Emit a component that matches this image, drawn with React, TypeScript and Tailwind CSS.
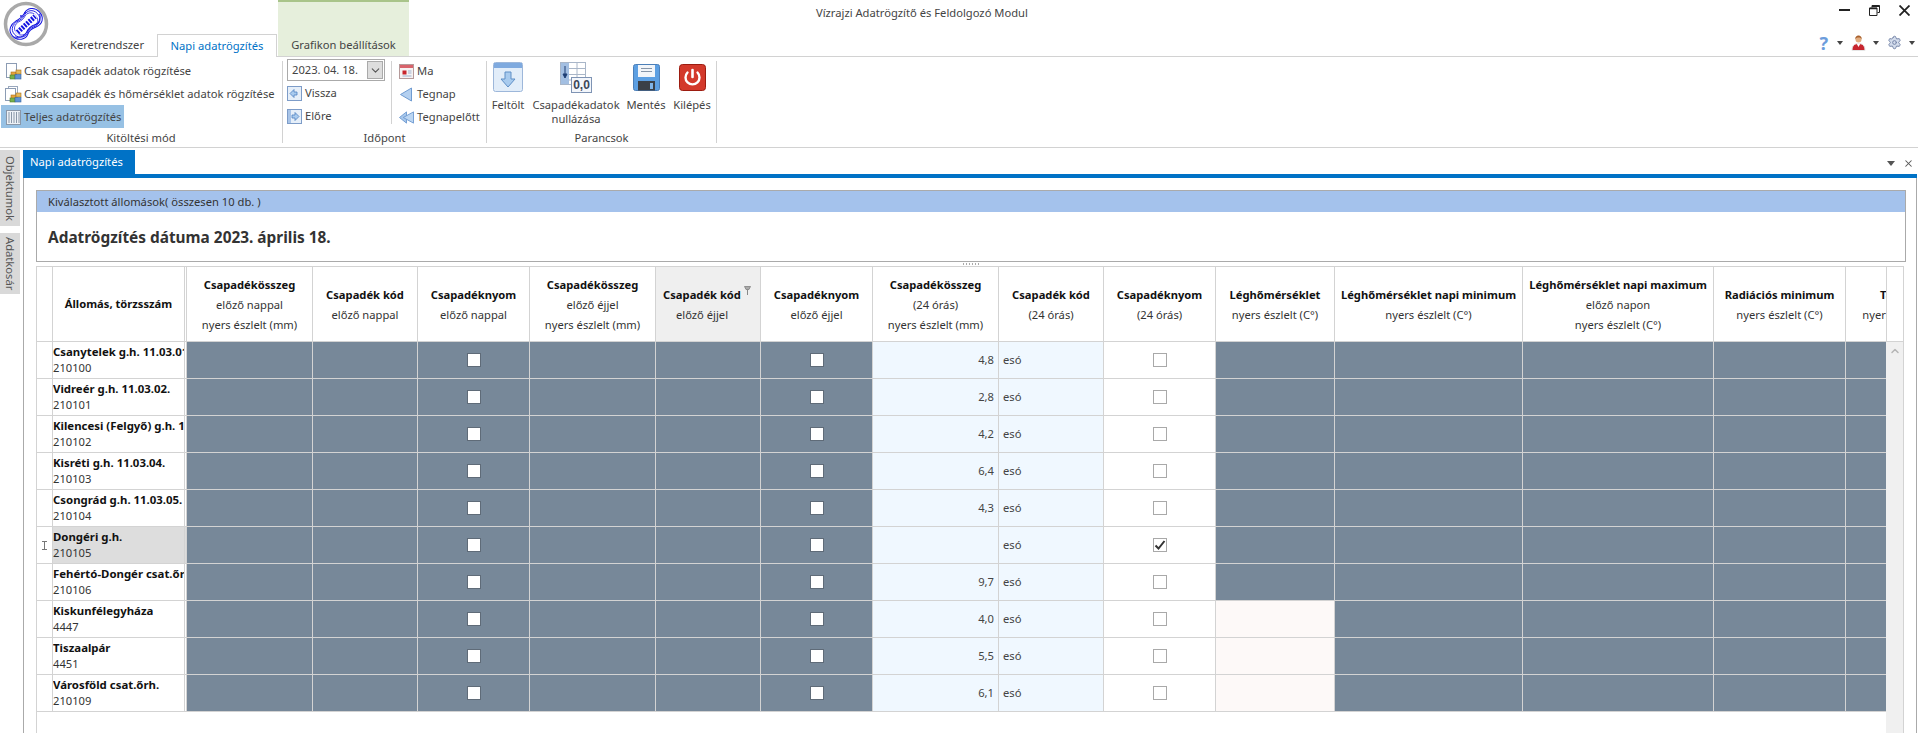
import { ChevronDown, ChevronUp, Settings, X } from "lucide-react";

const COLS = "grid grid-cols-[16px_134px_126px_105px_112px_126px_105px_112px_126px_105px_112px_119px_188px_191px_132px_120px] w-[1929px]";

const HEADERS = [
  { t: "Csapadékösszeg", s: ["előző nappal", "nyers észlelt (mm)"] },
  { t: "Csapadék kód", s: ["előző nappal"] },
  { t: "Csapadéknyom", s: ["előző nappal"] },
  { t: "Csapadékösszeg", s: ["előző éjjel", "nyers észlelt (mm)"] },
  { t: "Csapadék kód", s: ["előző éjjel"], filtered: true },
  { t: "Csapadéknyom", s: ["előző éjjel"] },
  { t: "Csapadékösszeg", s: ["(24 órás)", "nyers észlelt (mm)"] },
  { t: "Csapadék kód", s: ["(24 órás)"] },
  { t: "Csapadéknyom", s: ["(24 órás)"] },
  { t: "Léghőmérséklet", s: ["nyers észlelt (C°)"] },
  { t: "Léghőmérséklet napi minimum", s: ["nyers észlelt (C°)"] },
  { t: "Léghőmérséklet napi maximum", s: ["előző napon", "nyers észlelt (C°)"] },
  { t: "Radiációs minimum", s: ["nyers észlelt (C°)"] },
  { t: "Talajhőm", s: ["nyers észlelt (C°)"] },
];

const ROWS = [
  { name: "Csanytelek g.h. 11.03.01.", id: "210100", v: "4,8" },
  { name: "Vidreér g.h. 11.03.02.", id: "210101", v: "2,8" },
  { name: "Kilencesi (Felgyő) g.h. 11.03.03.", id: "210102", v: "4,2" },
  { name: "Kisréti g.h. 11.03.04.", id: "210103", v: "6,4" },
  { name: "Csongrád g.h. 11.03.05.", id: "210104", v: "4,3" },
  { name: "Dongéri g.h.", id: "210105", v: "", selected: true, checked: true },
  { name: "Fehértó-Dongér csat.őrh.", id: "210106", v: "9,7" },
  { name: "Kiskunfélegyháza", id: "4447", v: "4,0", temp: true },
  { name: "Tiszaalpár", id: "4451", v: "5,5", temp: true },
  { name: "Városföld csat.őrh.", id: "210109", v: "6,1", temp: true },
];

const PEANUT = "M5 23c0-8 7-10 12-9s7 2 12 0 12 1 12 9-6 11-12 9-8-2-12 0-12-1-12-9z";

function Logo() {
  return (
    <svg width="46" height="46" viewBox="0 0 46 46">
      <circle cx="23" cy="23" r="20.500" fill="#fff" stroke="#a9a9a9" strokeWidth="3.500" />
      <g fill="none" stroke="#1414e0" transform="rotate(-42 23 23)">
        {[1, 0.86, 0.72].map((k) => (
          <path key={k} d={PEANUT} strokeWidth="1" transform={`translate(23 23) scale(${k}) translate(-23 -23)`} />
        ))}
        <path d="M10 23.500h26" strokeWidth="5" stroke="#fff" />
        <path d="M11 23.500h24" strokeWidth="5" strokeDasharray="2 1.200" />
        <path d="M6 25c3 5 9 6 12 4.500s8-2 11 0 9 0 11-5" strokeWidth="1" />
      </g>
      <circle cx="22" cy="12" r="0.900" fill="#1414e0" />
      <circle cx="18" cy="15" r="0.900" fill="#1414e0" />
    </svg>
  );
}

function PageChart({ double }: { double?: boolean }) {
  return (
    <svg width="17" height="17" viewBox="0 0 17 17" className="-mr-px shrink-0">
      {double && <rect x="3.500" y="0.500" width="9" height="11" fill="#fff" stroke="#9aa8bd" />}
      <rect x={double ? 0.5 : 1.5} y={double ? 2.5 : 0.5} width="10" height={double ? 12 : 14} fill="#fff" stroke="#8c9cb4" />
      <rect x="6" y="9" width="5" height="3.500" fill="#e8a33c" stroke="#a8701c" strokeWidth="0.600" />
      <rect x="11" y="7" width="5" height="4" fill="#e4b95a" stroke="#a8701c" strokeWidth="0.600" />
      <rect x="5" y="12" width="5" height="4" fill="#76b04a" stroke="#4d7f2a" strokeWidth="0.600" />
      <rect x="10" y="11.500" width="6" height="4.500" fill="#5f93d3" stroke="#3a659e" strokeWidth="0.600" />
    </svg>
  );
}

function Bars() {
  return (
    <svg width="17" height="17" viewBox="0 0 17 17" className="-mr-px shrink-0">
      <rect x="1.500" y="1.500" width="14" height="14" fill="#eef2f7" stroke="#8a97a8" />
      <path d="M4 3v11M6.500 3v11M9 3v11M11.500 3v11M14 3v11" stroke="#8a97a8" />
    </svg>
  );
}

function NavBox({ right }: { right?: boolean }) {
  return (
    <svg width="15" height="15" viewBox="0 0 15 15" className="shrink-0">
      <rect x="0.500" y="0.500" width="14" height="14" fill="#e6eff9" stroke="#7d9cc8" />
      {right ? <rect x="1" y="1" width="3" height="13" fill="#a8c4e8" /> : null}
      <path
        d={right ? "M5 6h3V3.500L12 7.500 8 11.500V9H5z" : "M10 6H7V3.500L3 7.500l4 4V9h3z"}
        fill="#a9cbee"
        stroke="#4f80c0"
        strokeWidth="0.800"
      />
    </svg>
  );
}

function CalendarIcon() {
  return (
    <svg width="15" height="15" viewBox="0 0 15 15" className="shrink-0">
      <rect x="0.500" y="0.500" width="14" height="14" fill="#f6f2f2" stroke="#b59a9a" />
      <rect x="1" y="1" width="13" height="3" fill="#d8636b" />
      <rect x="3.500" y="6.500" width="4" height="4" fill="#c8242c" />
      <path d="M9 7h3.500M9 9h3.500M3.500 12h9" stroke="#9db2cf" />
    </svg>
  );
}

function Triangle({ double }: { double?: boolean }) {
  if (double) {
    return (
      <svg width="15" height="15" viewBox="0 0 16 15" className="shrink-0">
        <path d="M8 1.500v12L0.500 7.500z" fill="#a8c8ec" stroke="#6f9bd1" />
        <path d="M15.500 1.500v12L4.500 7.500z" fill="#bcd6f2" stroke="#6f9bd1" />
      </svg>
    );
  }
  return (
    <svg width="15" height="15" viewBox="0 0 15 15" className="shrink-0">
      <path d="M12.500 1v13L1.500 7.500z" fill="#b4d0f0" stroke="#6f9bd1" />
    </svg>
  );
}

function UploadIcon() {
  return (
    <svg width="30" height="30" viewBox="0 0 30 30">
      <rect x="0.500" y="0.500" width="29" height="29" rx="2" fill="#e2edf9" stroke="#9db7da" />
      <rect x="1" y="1" width="28" height="5" fill="#7faadf" />
      <path d="M12 10h6v7h4l-7 8-7-8h4z" fill="#a9cbee" stroke="#5f8fc6" />
    </svg>
  );
}

function ZeroIcon() {
  return (
    <svg width="32" height="31" viewBox="0 0 32 31">
      <rect x="0.500" y="0.500" width="25" height="22" fill="#fff" stroke="#a9b6c8" />
      <rect x="1" y="1" width="8" height="21" fill="#a3bfe2" />
      <path d="M9 6.500h16M9 12.500h16M9 18h16M17 1v21" stroke="#a9b6c8" />
      <path d="M5 4v11M3 12L5 16l2-4z" stroke="#1f3f74" fill="#1f3f74" />
      <rect x="11.500" y="15.500" width="20" height="15" fill="#f3f6fb" stroke="#7f94b4" />
      <text x="21.500" y="27" textAnchor="middle" fontSize="12" fontWeight="700" fill="#3b4658" fontFamily="'Liberation Sans', sans-serif">
        0,0
      </text>
    </svg>
  );
}

function SaveIcon() {
  return (
    <svg width="27" height="30" viewBox="0 0 27 30">
      <rect x="0.500" y="2.500" width="26" height="26" rx="2" fill="#5c9fe2" stroke="#4c7fb8" />
      <rect x="5" y="3" width="17" height="12" fill="#f2f5f9" />
      <path d="M8 6.500h11M8 9.500h11" stroke="#8695a8" />
      <rect x="5" y="19" width="17" height="9.500" fill="#3a4048" />
      <rect x="17" y="21" width="3" height="6" fill="#7fb4e8" />
    </svg>
  );
}

function PowerIcon() {
  return (
    <svg width="27" height="30" viewBox="0 0 27 30">
      <rect x="0.500" y="2.500" width="26" height="26" rx="3" fill="#d3392b" stroke="#9c1c10" />
      <path d="M8.500 10.500a7 7 0 1 0 10 0" fill="none" stroke="#fff" strokeWidth="2.400" strokeLinecap="round" />
      <path d="M13.500 8v7" stroke="#fff" strokeWidth="2.600" strokeLinecap="round" />
    </svg>
  );
}

function Caret() {
  return <span className="block h-0 w-0 border-x-[3.500px] border-t-[4px] border-x-transparent border-t-[#444]" />;
}

function Check({ dark, checked }: { dark?: boolean; checked?: boolean }) {
  return (
    <span
      className={
        dark
          ? "flex h-[14px] w-[14px] items-center justify-center border border-[#5f6b78] bg-white"
          : "flex h-[14px] w-[14px] items-center justify-center border border-[#a9a9a9] bg-white"
      }
    >
      {checked && (
        <svg width="12" height="12" viewBox="0 0 12 12">
          <path d="M1.500 6.500l3 3L10.500 2" fill="none" stroke="#333" strokeWidth="2" />
        </svg>
      )}
    </span>
  );
}

function RibbonRow({ children }: { children: React.ReactNode }) {
  return <div className="flex h-[23px] items-center gap-[3px] whitespace-nowrap">{children}</div>;
}

function CommandButton({ icon, label, width }: { icon: React.ReactNode; label: React.ReactNode; width: string }) {
  return (
    <div className={`flex flex-col items-center ${width}`}>
      <div className="flex h-[39px] items-start pt-[3px]">{icon}</div>
      <div className="text-center leading-[14px]">{label}</div>
    </div>
  );
}

const cell = "border-r border-b border-[#d3d3d3]";

function DataRow({ row }: { row: (typeof ROWS)[number] }) {
  const dark = `${cell} bg-[#778899]`;
  const darkCheck = `${dark} flex items-center justify-center`;
  return (
    <div className={`${COLS} h-[37px]`}>
      <div className={`${cell} flex items-center justify-center`}>
        {row.selected && (
          <svg width="5" height="9" viewBox="0 0 5 9">
            <path d="M0 .5h5M0 8.500h5M2.500 1v7" stroke="#777" fill="none" />
          </svg>
        )}
      </div>
      <div
        className={`border-r-[3px] border-b border-double border-r-[#d3d3d3] border-b-[#d3d3d3] overflow-hidden whitespace-nowrap pt-[1.500px] leading-[16px] ${row.selected ? "bg-[#dddddd]" : "bg-white"}`}
      >
        <div className="text-[11.400px] font-bold text-[#111]">{row.name}</div>
        <div className="text-[#333]">{row.id}</div>
      </div>
      <div className={dark} />
      <div className={dark} />
      <div className={darkCheck}>
        <Check dark />
      </div>
      <div className={dark} />
      <div className={dark} />
      <div className={darkCheck}>
        <Check dark />
      </div>
      <div className={`${cell} bg-[#f0f8ff] flex items-center justify-end pr-[4px] text-[#444]`}>{row.v}</div>
      <div className={`${cell} bg-[#f0f8ff] flex items-center pl-[4px] text-[#444]`}>esó</div>
      <div className={`${cell} flex items-center justify-center bg-white`}>
        <Check checked={row.checked} />
      </div>
      <div className={row.temp ? `${cell} bg-[#fdf9f8]` : dark} />
      <div className={dark} />
      <div className={dark} />
      <div className={dark} />
      <div className={dark} />
    </div>
  );
}

export default function App() {
  return (
    <div className="flex h-[733px] w-[1918px] flex-col overflow-hidden bg-white font-['Noto_Sans','Open_Sans',sans-serif] text-[11.200px] text-[#444]">
      {/* title bar + ribbon tabs */}
      <div className="flex h-[57px] shrink-0 border-b border-[#d2d2d2]">
        <div className="w-[57px] pl-[3px] pt-[1px]">
          <Logo />
        </div>
        <div className="flex h-[22px] w-[100px] items-center justify-center self-end">Keretrendszer</div>
        <div className="z-10 -mb-px flex h-[23px] w-[120px] items-center justify-center self-end border border-b-0 border-[#d2d2d2] bg-white text-[#0072c6]">
          Napi adatrögzítés
        </div>
        <div className="ml-px flex w-[131px] flex-col justify-end border-t-2 border-[#a9c48a] bg-[#e6efdc]">
          <div className="flex h-[22px] items-center justify-center">Grafikon beállítások</div>
        </div>
        <div className="flex flex-1 flex-col">
          <div className="flex h-[26px] items-center">
            <span className="ml-[407px]">Vízrajzi Adatrögzítő és Feldolgozó Modul</span>
            <div className="ml-auto flex items-center gap-[19px] pr-[8px]">
              <span className="mt-[-6px] h-[2px] w-[11px] bg-[#222]" />
              <svg width="11" height="11" viewBox="0 0 11 11" className="mt-[-6px]">
                <path d="M3 2.500V.5h7.500v7H8.500M.5 3h7.500v7.500H.5z" fill="none" stroke="#222" />
                <path d="M.5 3.500H8M3 1.200h7.500" stroke="#222" strokeWidth="1.500" />
              </svg>
              <svg width="11" height="11" viewBox="0 0 11 11" className="mt-[-6px]">
                <path d="M.5.5l10 10M10.500.5l-10 10" stroke="#222" strokeWidth="1.800" />
              </svg>
            </div>
          </div>
          <div className="flex h-[30px] items-center justify-end pr-[3px] pt-[3px]">
            <span className="text-[18px] font-bold leading-none text-[#6d9ddc]">?</span>
            <span className="ml-[9px] mr-[8px]">
              <Caret />
            </span>
            <svg width="15" height="16" viewBox="0 0 15 16">
              <path d="M1 15.500c0-5 2.500-7 6.500-7s6.500 2 6.500 7z" fill="#c8252e" stroke="#e6e6e6" />
              <path d="M5.500 8.500l2 3.500 2-3.500z" fill="#fff" />
              <circle cx="7.500" cy="4.500" r="3" fill="#e2ad80" />
              <path d="M4.300 4.500C4 1.500 6 .5 7.500.5s3.500 1 3.200 4c-.5-1.500-1.500-2-3.200-2s-2.700.5-3.200 2z" fill="#a8602c" />
            </svg>
            <span className="ml-[7px] mr-[8px]">
              <Caret />
            </span>
            <Settings size={15} fill="#d3dcec" stroke="#7585a8" strokeWidth={1.600} />
            <span className="ml-[7px]">
              <Caret />
            </span>
          </div>
        </div>
      </div>

      {/* ribbon */}
      <div className="flex h-[91px] shrink-0 border-b border-[#d2d2d2]">
        <div className="flex w-[282px] flex-col pt-[3px]">
          <div className="pl-[5px]">
            <RibbonRow>
              <PageChart />
              Csak csapadék adatok rögzítése
            </RibbonRow>
            <RibbonRow>
              <PageChart double />
              Csak csapadék és hőmérséklet adatok rögzítése
            </RibbonRow>
          </div>
          <div className="ml-px -mt-px flex h-[23px] w-[123px] items-center gap-[3px] whitespace-nowrap bg-[#97c1e4] pl-[4px] pt-px">
            <Bars />
            Teljes adatrögzítés
          </div>
          <div className="mt-auto flex h-[18px] items-center justify-center">Kitöltési mód</div>
        </div>
        <div className="my-[4px] w-px bg-[#d2d2d2]" />

        <div className="flex w-[203px] flex-col pt-[2px]">
          <div className="flex pl-[4px]">
            <div className="w-[104px]">
              <div className="mb-px flex h-[22px] w-[98px] items-center border border-[#aaa] pl-[4px]">
                <span className="flex-1">2023. 04. 18.</span>
                <span className="mr-px flex h-[18px] w-[16px] items-center justify-center border border-[#aaa] bg-[#ddd]">
                  <ChevronDown size={13} color="#555" />
                </span>
              </div>
              <RibbonRow>
                <NavBox />
                Vissza
              </RibbonRow>
              <RibbonRow>
                <NavBox right />
                Előre
              </RibbonRow>
            </div>
            <div className="mt-[2px] mb-[5px] w-px bg-[#d2d2d2]" />
            <div className="pl-[7px] pt-px">
              <RibbonRow>
                <CalendarIcon />
                Ma
              </RibbonRow>
              <RibbonRow>
                <Triangle />
                Tegnap
              </RibbonRow>
              <RibbonRow>
                <Triangle double />
                Tegnapelőtt
              </RibbonRow>
            </div>
          </div>
          <div className="mt-auto flex h-[18px] items-center justify-center">Időpont</div>
        </div>
        <div className="my-[4px] w-px bg-[#d2d2d2]" />

        <div className="flex w-[229px] flex-col pt-[2px]">
          <div className="flex pl-[1px]">
            <CommandButton width="w-[40px]" icon={<UploadIcon />} label="Feltölt" />
            <CommandButton
              width="w-[96px]"
              icon={<ZeroIcon />}
              label={
                <>
                  Csapadékadatok
                  <br />
                  nullázása
                </>
              }
            />
            <CommandButton width="w-[44px]" icon={<SaveIcon />} label="Mentés" />
            <CommandButton width="w-[48px]" icon={<PowerIcon />} label="Kilépés" />
          </div>
          <div className="mt-auto flex h-[18px] items-center justify-center">Parancsok</div>
        </div>
        <div className="my-[4px] w-px bg-[#d2d2d2]" />
      </div>

      {/* document area */}
      <div className="flex min-h-0 flex-1">
        <div className="flex w-[23px] shrink-0 flex-col gap-[7px] pt-[2px] text-[#555]">
          <div className="flex h-[76px] w-[20px] items-center justify-center bg-[#d9d9d9] [writing-mode:vertical-rl]">
            Objektumok
          </div>
          <div className="flex h-[61px] w-[20px] items-center justify-center bg-[#d9d9d9] [writing-mode:vertical-rl]">
            Adatkosár
          </div>
        </div>

        <div className="flex w-[1894px] flex-col">
          <div className="flex h-[26px] shrink-0 items-end">
            <div className="flex h-[24px] w-[112px] items-center bg-[#0072c6] pl-[7px] text-white">Napi adatrögzítés</div>
            <div className="ml-auto flex items-center gap-[8px] self-center pr-[3px] pt-[4px]">
              <span className="h-0 w-0 border-x-[4.500px] border-t-[5px] border-x-transparent border-t-[#555]" />
              <X size={11} color="#555" strokeWidth={2.200} />
            </div>
          </div>
          <div className="h-[4px] shrink-0 bg-[#0072c6]" />

          <div className="flex min-h-0 flex-1 flex-col border-x border-[#aaa] pl-[12px] pr-[10px] pt-[12px]">
            <div className="flex h-[72px] shrink-0 flex-col border border-[#aaa]">
              <div className="flex h-[21px] items-center bg-[#a4c2ec] pl-[11px] pt-px text-[#333]">
                Kiválasztott állomások( összesen 10 db. )
              </div>
              <div className="flex flex-1 items-center pl-[11px] pt-[3px] text-[15.400px] font-bold text-[#333]">
                Adatrögzítés dátuma 2023. április 18.
              </div>
            </div>
            <div className="flex h-[4px] shrink-0 items-center justify-center">
              <span className="h-[2px] w-[16px] bg-[repeating-linear-gradient(90deg,#aaa_0_1px,transparent_1px_3px)]" />
            </div>

            <div className="mr-[2px] flex min-h-0 flex-1 border-l border-t border-[#d3d3d3]">
              <div className="min-w-0 flex-1 overflow-hidden">
                <div className={`${COLS} h-[75px]`}>
                  <div className={cell} />
                  <div className="flex items-center justify-center border-r-[3px] border-b border-double border-r-[#d3d3d3] border-b-[#d3d3d3] pt-[1px] font-bold text-[#111]">
                    Állomás, törzsszám
                  </div>
                  {HEADERS.map((h, i) => (
                    <div
                      key={i}
                      className={`${cell} relative flex flex-col items-center justify-center whitespace-nowrap pt-[2px] leading-[20px] ${h.filtered ? "bg-[#efefef] pr-[12px]" : ""}`}
                    >
                      <div className="font-bold text-[#111]">{h.t}</div>
                      {h.s.map((s) => (
                        <div key={s} className="text-[#333]">
                          {s}
                        </div>
                      ))}
                      {h.filtered && (
                        <svg width="7" height="9" viewBox="0 0 7 9" className="absolute right-[9px] top-[19px]">
                          <path d="M.5 .5h6L5 3.500H2z" fill="#aaa" stroke="#777" strokeWidth="0.700" />
                          <path d="M3.500 3.500V9" stroke="#888" />
                        </svg>
                      )}
                    </div>
                  ))}
                </div>
                {ROWS.map((row) => (
                  <DataRow key={row.id} row={row} />
                ))}
              </div>

              <div className="flex w-[18px] shrink-0 flex-col border-r border-[#d3d3d3]">
                <div className="h-[75px] shrink-0 border-b border-l border-[#d3d3d3]" />
                <div className="flex flex-1 justify-center bg-[#f0f0f0] pt-[3px]">
                  <ChevronUp size={12} color="#b5b5b5" strokeWidth={3} />
                </div>
              </div>
            </div>
          </div>
        </div>
        <div className="w-px" />
      </div>
    </div>
  );
}
